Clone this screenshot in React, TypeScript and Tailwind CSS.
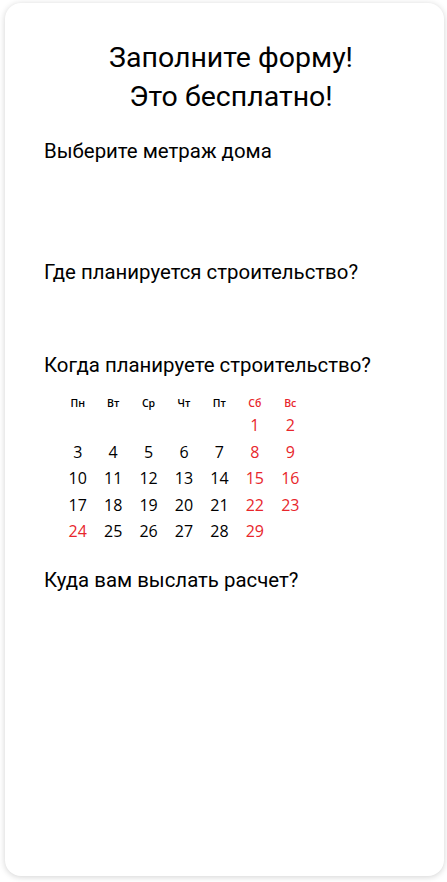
const weekDays = ["Пн", "Вт", "Ср", "Чт", "Пт", "Сб", "Вс"];

// февраль: первое число приходится на субботу
const days: (number | null)[] = [null, null, null, null, null, ...Array.from({ length: 29 }, (_, i) => i + 1)];

function Calendar() {
    return (
        <div className="ml-[16px] mt-[19px] w-[248px] font-['Open_Sans',sans-serif]">
            <div className="grid grid-cols-7">
                {weekDays.map((d, i) => (
                    <div
                        key={d}
                        className={`h-[14px] text-center text-[10.5px] leading-[14px] font-semibold ${i >= 5 ? "text-[#e8262c]" : "text-black"}`}
                    >
                        {d}
                    </div>
                ))}
            </div>
            <div className="mt-[2px] grid grid-cols-7">
                {days.map((day, idx) => (
                    <div
                        key={idx}
                        className={`h-[26.5px] text-center text-[16px] leading-[26.5px] ${
                            idx % 7 >= 5 || day === 24 ? "text-[#e8262c]" : "text-black"
                        }`}
                    >
                        {day ?? ""}
                    </div>
                ))}
            </div>
        </div>
    );
}

export default function App() {
    return (
        <div className="min-h-[882px] bg-white pt-[3px] pl-[5px] pr-[3px] pb-[6px] font-['Roboto',sans-serif]">
            <div className="h-[873px] rounded-[16px] bg-white shadow-[0_1px_6px_rgba(0,0,0,0.18)]">
                <h1 className="pt-[35px] pl-[13px] text-center text-[28.5px] leading-[39px] text-black">
                    Заполните форму!
                    <br />
                    Это бесплатно!
                </h1>
                <div className="px-[39px] text-[20.4px] leading-[24px] text-black">
                    <p className="mt-[23px]">Выберите метраж дома</p>
                    <p className="mt-[97px]">Где планируется строительство?</p>
                    <p className="mt-[69px]">Когда планируете строительство?</p>
                    <Calendar />
                    <p className="mt-[23px]">Куда вам выслать расчет?</p>
                </div>
            </div>
        </div>
    );
}
